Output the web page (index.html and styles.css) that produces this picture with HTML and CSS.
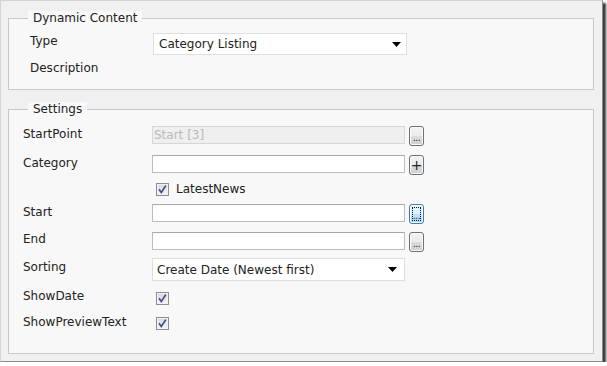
FILE: index.html
```html
<!DOCTYPE html>
<html lang="en">
<head>
<meta charset="UTF-8">
<title>Dynamic Content</title>
<link rel="stylesheet" href="styles.css">
</head>
<body>
<div class="window">
    <fieldset class="group">
        <legend>Dynamic Content</legend>
        <div class="form form-top">
            <div class="label">Type</div>
            <div class="select select-type">
                <span>Category Listing</span>
                <svg width="9" height="5" viewBox="0 0 9 5"><polygon points="0,0 9,0 4.5,5" fill="#000"/></svg>
            </div>
            <div class="label">Description</div>
            <div></div>
        </div>
    </fieldset>

    <fieldset class="group">
        <legend>Settings</legend>
        <div class="form form-settings">
            <div class="label">StartPoint</div>
            <div class="field">
                <div class="input disabled">Start [3]</div>
                <div class="btn"><span class="dots">...</span></div>
            </div>

            <div class="label">Category</div>
            <div class="field">
                <div class="input"></div>
                <div class="btn btn-plus">+</div>
            </div>

            <div></div>
            <div class="check-row">
                <span class="check"><svg width="11" height="11" viewBox="0 0 11 11"><path d="M2 5.2 L4.3 8.4 L8.8 1.6" fill="none" stroke="#3d4f91" stroke-width="1.7"/></svg></span>
                <span>LatestNews</span>
            </div>

            <div class="label">Start</div>
            <div class="field">
                <div class="input"></div>
                <div class="btn focused"><span class="dots">...</span></div>
            </div>

            <div class="label">End</div>
            <div class="field nudge">
                <div class="input"></div>
                <div class="btn"><span class="dots">...</span></div>
            </div>

            <div class="label label-low">Sorting</div>
            <div class="select select-sort">
                <span>Create Date (Newest first)</span>
                <svg width="9" height="5" viewBox="0 0 9 5"><polygon points="0,0 9,0 4.5,5" fill="#000"/></svg>
            </div>

            <div class="label">ShowDate</div>
            <div class="check-row check-date">
                <span class="check"><svg width="11" height="11" viewBox="0 0 11 11"><path d="M2 5.2 L4.3 8.4 L8.8 1.6" fill="none" stroke="#3d4f91" stroke-width="1.7"/></svg></span>
            </div>

            <div class="label">ShowPreviewText</div>
            <div class="check-row check-preview">
                <span class="check"><svg width="11" height="11" viewBox="0 0 11 11"><path d="M2 5.2 L4.3 8.4 L8.8 1.6" fill="none" stroke="#3d4f91" stroke-width="1.7"/></svg></span>
            </div>
        </div>
    </fieldset>
</div>
</body>
</html>
```

FILE: styles.css
```css
body {
    margin: 0;
    background: #fff;
    font-family: "DejaVu Sans", Verdana, sans-serif;
    font-size: 12px;
    color: #222;
}
.window {
    width: 603px;
    height: 362px;
    box-sizing: border-box;
    border: 1px solid #d4d4d4;
    border-right-color: #8c8c8c;
    border-bottom-color: #8c8c8c;
    background: #f0f0f0;
    box-shadow: 3px 3px 2px #3a3a3a;
    padding: 10px 8px 0 7px;
}
.group {
    margin: 0;
    padding: 0;
    min-width: 0;
    border: 1px solid #c8c8c8;
    background: #f8f8f8;
}
.group + .group {
    margin-top: 12px;
}
legend {
    margin-left: 19px;
    padding: 0 5px;
    line-height: 14px;
    background: #f8f8f8;
}
.form {
    display: grid;
    align-items: start;
    justify-items: start;
}
.form-top {
    grid-template-columns: 123px 254px;
    grid-template-rows: 22px auto;
    row-gap: 5px;
    padding: 8px 0 14px 21px;
}
.form-settings {
    grid-template-columns: 129px auto;
    grid-template-rows: 29px 27px 22px 27px 27px 30px 26px auto;
    padding: 10px 0 23px 14px;
}
.label {
    line-height: 14px;
    padding-top: 1px;
}
.label-low {
    padding-top: 2px;
}
.field {
    display: flex;
    gap: 4px;
}
.nudge {
    margin-top: 1px;
}
.input {
    width: 253px;
    height: 18px;
    box-sizing: border-box;
    border: 1px solid #bcbcbc;
    border-top-color: #a9a9a9;
    background: #fff;
    padding: 0 1px;
    line-height: 16px;
}
.input.disabled {
    background: #efefef;
    border-color: #d6d6d6;
    color: #b9b9b9;
}
.select {
    display: flex;
    align-items: center;
    justify-content: space-between;
    box-sizing: border-box;
    border: 1px solid #dedede;
    background: #fff;
    padding: 0 5px 0 5px;
}
.select-type {
    width: 254px;
    height: 22px;
}
.select-sort {
    width: 253px;
    height: 23px;
    padding-left: 4px;
    padding-right: 7px;
}
.btn {
    width: 15px;
    height: 20px;
    box-sizing: border-box;
    border: 1px solid #707070;
    border-radius: 3px;
    background: linear-gradient(#f2f2f2 0, #ebebeb 50%, #dddddd 50%, #cfcfcf 100%);
    box-shadow: inset 0 0 0 1px #fbfbfb;
    display: flex;
    justify-content: center;
    align-items: flex-end;
    color: #222;
}
.dots {
    font-family: "Liberation Sans", Arial, sans-serif;
    font-size: 10px;
    line-height: 8px;
    padding-bottom: 3px;
    letter-spacing: -0.5px;
}
.btn-plus {
    align-items: center;
    font-size: 14px;
    line-height: 14px;
}
.btn.focused {
    border-color: #3c7fb1;
    background: linear-gradient(#eaf6fd 0, #d9f0fc 50%, #bee6fd 50%, #a7d9f5 100%);
    outline: 1px dotted #111;
    outline-offset: -4px;
}
.check-row {
    display: flex;
    align-items: center;
    gap: 7px;
    padding-left: 4px;
    line-height: 14px;
}
.check-date {
    margin-top: 4px;
}
.check-preview {
    margin-top: 3px;
}
.check {
    width: 13px;
    height: 13px;
    box-sizing: border-box;
    border: 1px solid #8e8f8f;
    background: linear-gradient(#d8d8d8, #f6f6f6);
    box-shadow: inset 0 0 0 1px #f2f2f2;
    display: flex;
    align-items: center;
    justify-content: center;
}
```
